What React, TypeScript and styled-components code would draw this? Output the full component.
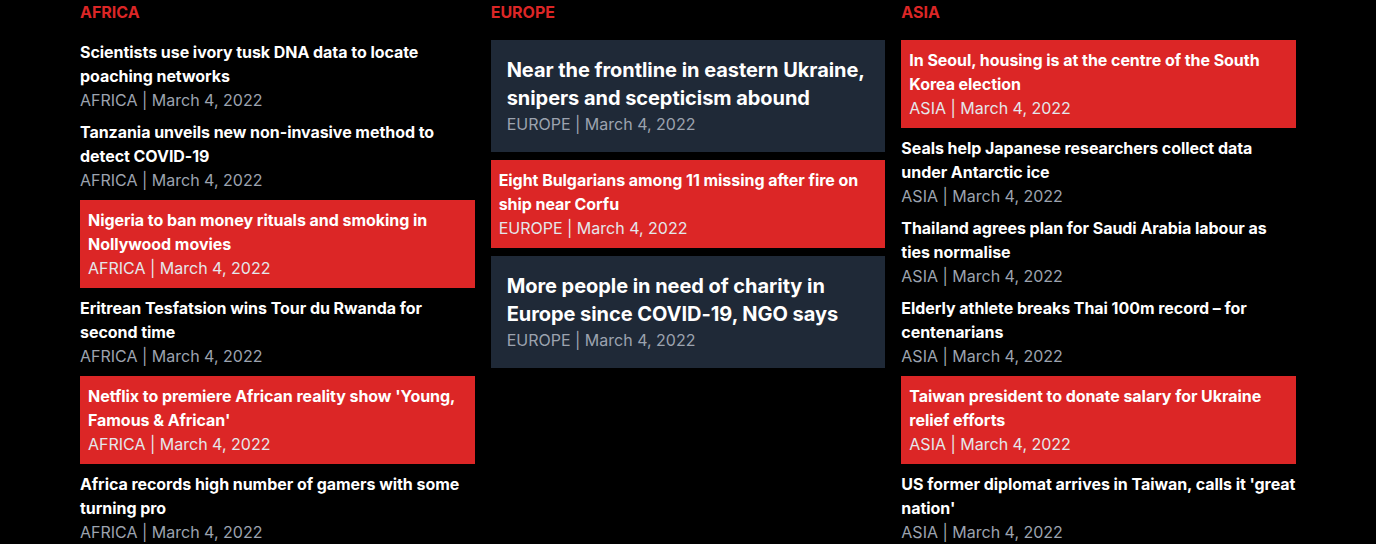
import React from "react";
import styled, { createGlobalStyle } from "styled-components";

const Global = createGlobalStyle`
  html, body { margin: 0; padding: 0; background: #000; }
  body { font-family: Inter, "Noto Sans", sans-serif; color: #fff; }
`;

const Page = styled.div`
  width: 1216px;
  margin: 0 auto;
  display: grid;
  grid-template-columns: repeat(3, 1fr);
  column-gap: 16px;
`;

const Column = styled.section`
  display: flex;
  flex-direction: column;
`;

const Heading = styled.h2`
  margin: 0 0 16px;
  font-size: 16px;
  line-height: 24px;
  font-weight: 700;
  color: #dc2626;
  text-transform: uppercase;
`;

const List = styled.div`
  display: flex;
  flex-direction: column;
  gap: 8px;
`;

type Variant = "plain" | "red" | "dark";

const Card = styled.article<{ $variant: Variant }>`
  padding: ${(p) => (p.$variant === "plain" ? "0" : p.$variant === "red" ? "8px" : "16px")};
  background: ${(p) => (p.$variant === "red" ? "#dc2626" : p.$variant === "dark" ? "#1f2937" : "transparent")};
`;

const Title = styled.h3<{ $big?: boolean }>`
  margin: 0;
  font-size: ${(p) => (p.$big ? "20px" : "16px")};
  line-height: ${(p) => (p.$big ? "28px" : "24px")};
  font-weight: 700;
  letter-spacing: -0.05px;
  color: #fff;
`;

const Meta = styled.div<{ $onRed?: boolean }>`
  font-size: 16px;
  line-height: 24px;
  font-weight: 400;
  color: ${(p) => (p.$onRed ? "#e5e7eb" : "#9ca3af")};
`;

type Item = { title: string; variant: Variant };

const africa: Item[] = [
  { title: "Scientists use ivory tusk DNA data to locate poaching networks", variant: "plain" },
  { title: "Tanzania unveils new non-invasive method to detect COVID-19", variant: "plain" },
  { title: "Nigeria to ban money rituals and smoking in Nollywood movies", variant: "red" },
  { title: "Eritrean Tesfatsion wins Tour du Rwanda for second time", variant: "plain" },
  { title: "Netflix to premiere African reality show 'Young, Famous & African'", variant: "red" },
  { title: "Africa records high number of gamers with some turning pro", variant: "plain" },
];

const europe: Item[] = [
  { title: "Near the frontline in eastern Ukraine, snipers and scepticism abound", variant: "dark" },
  { title: "Eight Bulgarians among 11 missing after fire on ship near Corfu", variant: "red" },
  { title: "More people in need of charity in Europe since COVID-19, NGO says", variant: "dark" },
];

const asia: Item[] = [
  { title: "In Seoul, housing is at the centre of the South Korea election", variant: "red" },
  { title: "Seals help Japanese researchers collect data under Antarctic ice", variant: "plain" },
  { title: "Thailand agrees plan for Saudi Arabia labour as ties normalise", variant: "plain" },
  { title: "Elderly athlete breaks Thai 100m record \u2013 for centenarians", variant: "plain" },
  { title: "Taiwan president to donate salary for Ukraine relief efforts", variant: "red" },
  { title: "US former diplomat arrives in Taiwan, calls it 'great nation'", variant: "plain" },
];

const sections = [
  { name: "Africa", items: africa },
  { name: "Europe", items: europe },
  { name: "Asia", items: asia },
];

export default function App() {
  return (
    <>
      <Global />
      <Page>
        {sections.map((s) => (
          <Column key={s.name}>
            <Heading>{s.name}</Heading>
            <List>
              {s.items.map((it) => (
                <Card key={it.title} $variant={it.variant}>
                  <Title $big={it.variant === "dark"}>{it.title}</Title>
                  <Meta $onRed={it.variant === "red"}>
                    {s.name.toUpperCase()} | March 4, 2022
                  </Meta>
                </Card>
              ))}
            </List>
          </Column>
        ))}
      </Page>
    </>
  );
}
